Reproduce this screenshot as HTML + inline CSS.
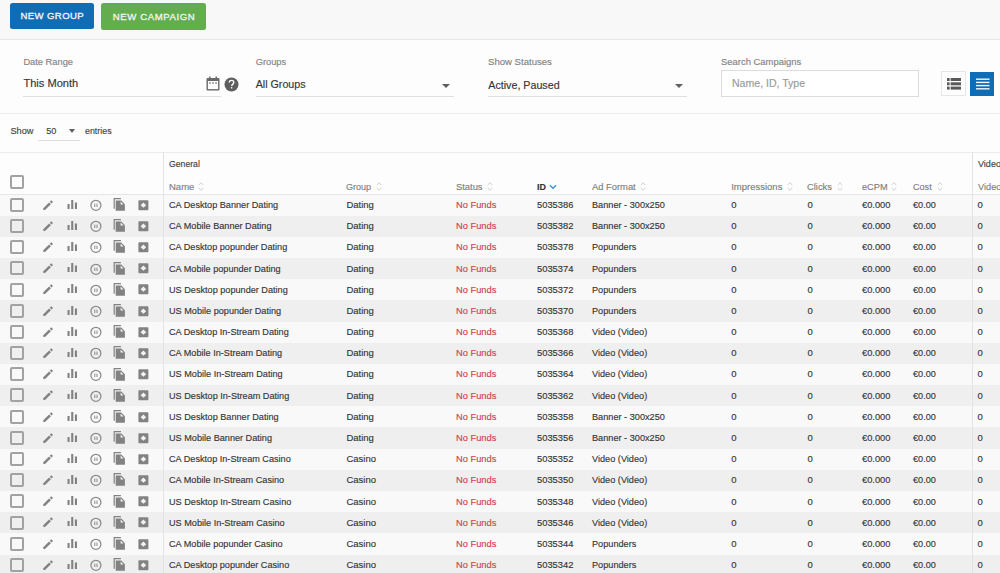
<!DOCTYPE html>
<html><head><meta charset="utf-8"><style>
html,body{margin:0;padding:0;}
body{width:1000px;height:573px;overflow:hidden;position:relative;background:#fdfdfd;font-family:"Liberation Sans", sans-serif;}
.t{position:absolute;white-space:nowrap;-webkit-text-stroke:0.15px currentColor;}
.ic{position:absolute;display:block;}
.btn{position:absolute;border-radius:2.5px;}
.cb{position:absolute;width:10px;height:10px;border:2px solid #a2a2a2;border-radius:2px;}
.arr{position:absolute;width:0;height:0;border-style:solid;border-width:4.4px 4.1px 0 4.1px;border-color:#5f5f5f transparent transparent transparent;}
</style></head><body>
<div style="position:absolute;left:0;top:0;width:1000px;height:39px;background:#f8f8f8;border-bottom:1px solid #e7e7e7"></div><div class="btn" style="left:9.5px;top:3px;width:84.5px;height:25.5px;background:#0f6db6"></div><div class="t" style="left:20.6px;top:11.00px;font-size:9.6px;line-height:9.6px;color:#f4f8fb;font-weight:normal;letter-spacing:0.35px;-webkit-text-stroke:0.3px #f4f8fb;">NEW GROUP</div><div class="btn" style="left:101px;top:3px;width:104.5px;height:26.5px;background:#63ad4f"></div><div class="t" style="left:112.8px;top:12.00px;font-size:9.6px;line-height:9.6px;color:#f1f5ef;font-weight:normal;letter-spacing:0.58px;-webkit-text-stroke:0.3px #f1f5ef;">NEW CAMPAIGN</div><div style="position:absolute;left:0;top:113px;width:1000px;height:1px;background:#eaeaea"></div><div class="t" style="left:23.4px;top:58.00px;font-size:9.3px;line-height:9.3px;color:#848484;font-weight:normal;letter-spacing:0px;">Date Range</div><div class="t" style="left:23.4px;top:78.00px;font-size:11.1px;line-height:11.1px;color:#353535;font-weight:normal;letter-spacing:0px;">This Month</div><div style="position:absolute;left:23.4px;top:96.4px;width:198px;height:1px;background:#e0e0e0"></div><svg class="ic" style="left:206px;top:75.5px" width="14" height="15" viewBox="0 0 14 15"><path fill="#6a6a6a" d="M3 0.5h1.5v1.5h5V0.5H11v1.5h1.2c.8 0 1.3.5 1.3 1.3v9.9c0 .8-.5 1.3-1.3 1.3H1.8C1 14.5.5 14 .5 13.2V3.3C.5 2.5 1 2 1.8 2H3z"/><rect x="1.9" y="5" width="10.2" height="8.1" fill="#fdfdfd"/><rect x="3.3" y="6.2" width="1.3" height="1.6" fill="#6a6a6a"/><rect x="6.35" y="6.2" width="1.3" height="1.6" fill="#6a6a6a"/><rect x="9.4" y="6.2" width="1.3" height="1.6" fill="#6a6a6a"/></svg><svg class="ic" style="left:224.3px;top:77.3px" width="15" height="15" viewBox="0 0 15 15"><circle cx="7.5" cy="7.5" r="7.0" fill="#5e5e5e"/><path d="M5.2 5.6c0-1.3 1-2.2 2.3-2.2s2.3.9 2.3 2.1c0 1.6-2.1 1.7-2.1 3.4" fill="none" stroke="#fdfdfd" stroke-width="1.4"/><rect x="6.9" y="10.1" width="1.4" height="1.4" fill="#fdfdfd"/></svg><div class="t" style="left:255.7px;top:58.00px;font-size:9.3px;line-height:9.3px;color:#848484;font-weight:normal;letter-spacing:0px;">Groups</div><div class="t" style="left:255.7px;top:79.00px;font-size:10.7px;line-height:10.7px;color:#353535;font-weight:normal;letter-spacing:0px;">All Groups</div><div style="position:absolute;left:255.7px;top:96.4px;width:198.3px;height:1px;background:#e0e0e0"></div><div class="arr" style="left:442.3px;top:83.6px"></div><div class="t" style="left:488.3px;top:58.00px;font-size:9.3px;line-height:9.3px;color:#848484;font-weight:normal;letter-spacing:0px;transform:scaleX(1.03);transform-origin:0 0;">Show Statuses</div><div class="t" style="left:488.3px;top:80.00px;font-size:10.7px;line-height:10.7px;color:#353535;font-weight:normal;letter-spacing:0px;">Active, Paused</div><div style="position:absolute;left:488.1px;top:96.4px;width:198.6px;height:1px;background:#e0e0e0"></div><div class="arr" style="left:675.2px;top:83.5px"></div><div class="t" style="left:720.8px;top:58.00px;font-size:9.3px;line-height:9.3px;color:#848484;font-weight:normal;letter-spacing:0px;transform:scaleX(1.015);transform-origin:0 0;">Search Campaigns</div><div style="position:absolute;left:721px;top:70.2px;width:195.8px;height:24.8px;border:1px solid #dcdcdc;background:#fff"></div><div class="t" style="left:732.3px;top:79.00px;font-size:10.2px;line-height:10.2px;color:#9a9a9a;font-weight:normal;letter-spacing:0px;transform:scaleX(1.035);transform-origin:0 0;">Name, ID, Type</div><div style="position:absolute;left:940.5px;top:71px;width:23.3px;height:23px;border:1px solid #e6e6e6;background:#fdfdfd"></div><svg class="ic" style="left:947px;top:78px" width="14" height="12" viewBox="0 0 14 12"><g fill="#5a5a5a"><rect x="0" y="0" width="2.6" height="3"/><rect x="3.6" y="0" width="10.4" height="3"/><rect x="0" y="4.3" width="2.6" height="3"/><rect x="3.6" y="4.3" width="10.4" height="3"/><rect x="0" y="8.6" width="2.6" height="3"/><rect x="3.6" y="8.6" width="10.4" height="3"/></g></svg><div style="position:absolute;left:970px;top:71.5px;width:24px;height:24.5px;background:#0f6db6"></div><svg class="ic" style="left:976px;top:77.5px" width="14" height="12" viewBox="0 0 14 12"><g fill="#f2f6fa"><rect x="0" y="0.5" width="13.5" height="1.4"/><rect x="0" y="3.7" width="13.5" height="1.4"/><rect x="0" y="6.9" width="13.5" height="1.4"/><rect x="0" y="10.1" width="13.5" height="1.4"/></g></svg><div class="t" style="left:10.4px;top:127.00px;font-size:9.2px;line-height:9.2px;color:#454545;font-weight:normal;letter-spacing:0px;">Show</div><div class="t" style="left:46.2px;top:127.00px;font-size:9.2px;line-height:9.2px;color:#454545;font-weight:normal;letter-spacing:0px;">50</div><div class="arr" style="left:68.9px;top:128.8px;border-width:4px 3.3px 0 3.3px;"></div><div style="position:absolute;left:37.5px;top:139.5px;width:42.5px;height:1px;background:#dcdcdc"></div><div class="t" style="left:84.8px;top:127.00px;font-size:9.2px;line-height:9.2px;color:#454545;font-weight:normal;letter-spacing:0px;transform:scaleX(0.964);transform-origin:0 0;">entries</div><div style="position:absolute;left:0;top:152px;width:1000px;height:1px;background:#ececec"></div><div style="position:absolute;left:0;top:194px;width:1000px;height:1px;background:#e6e6e6"></div><div class="cb" style="left:10.2px;top:175.2px"></div><div class="t" style="left:169px;top:159.00px;font-size:9.5px;line-height:9.5px;color:#3f3f3f;font-weight:normal;letter-spacing:0px;transform:scaleX(0.912);transform-origin:0 0;">General</div><div class="t" style="left:977.6px;top:159.00px;font-size:9.5px;line-height:9.5px;color:#3f3f3f;font-weight:normal;letter-spacing:0px;transform:scaleX(0.95);transform-origin:0 0;">Video</div><div class="t" style="left:169px;top:182.00px;font-size:9.5px;line-height:9.5px;color:#808080;font-weight:normal;letter-spacing:0px;">Name</div><svg class="ic" style="left:198px;top:181px" width="6" height="11" viewBox="0 0 6 11"><path d="M0.8 4.2L3 1.6 5.2 4.2M0.8 6.8L3 9.4 5.2 6.8" fill="none" stroke="#cfcfcf" stroke-width="0.9"/></svg><div class="t" style="left:346.4px;top:182.00px;font-size:9.5px;line-height:9.5px;color:#808080;font-weight:normal;letter-spacing:0px;transform:scaleX(0.946);transform-origin:0 0;">Group</div><svg class="ic" style="left:376px;top:181px" width="6" height="11" viewBox="0 0 6 11"><path d="M0.8 4.2L3 1.6 5.2 4.2M0.8 6.8L3 9.4 5.2 6.8" fill="none" stroke="#cfcfcf" stroke-width="0.9"/></svg><div class="t" style="left:456.4px;top:182.00px;font-size:9.5px;line-height:9.5px;color:#808080;font-weight:normal;letter-spacing:0px;transform:scaleX(0.985);transform-origin:0 0;">Status</div><svg class="ic" style="left:487px;top:181px" width="6" height="11" viewBox="0 0 6 11"><path d="M0.8 4.2L3 1.6 5.2 4.2M0.8 6.8L3 9.4 5.2 6.8" fill="none" stroke="#cfcfcf" stroke-width="0.9"/></svg><div class="t" style="left:591.6px;top:182.00px;font-size:9.5px;line-height:9.5px;color:#808080;font-weight:normal;letter-spacing:0px;transform:scaleX(0.986);transform-origin:0 0;">Ad Format</div><svg class="ic" style="left:639.6px;top:181px" width="6" height="11" viewBox="0 0 6 11"><path d="M0.8 4.2L3 1.6 5.2 4.2M0.8 6.8L3 9.4 5.2 6.8" fill="none" stroke="#cfcfcf" stroke-width="0.9"/></svg><div class="t" style="left:731.2px;top:182.00px;font-size:9.5px;line-height:9.5px;color:#808080;font-weight:normal;letter-spacing:0px;">Impressions</div><svg class="ic" style="left:786.6px;top:181px" width="6" height="11" viewBox="0 0 6 11"><path d="M0.8 4.2L3 1.6 5.2 4.2M0.8 6.8L3 9.4 5.2 6.8" fill="none" stroke="#cfcfcf" stroke-width="0.9"/></svg><div class="t" style="left:807.4px;top:182.00px;font-size:9.5px;line-height:9.5px;color:#808080;font-weight:normal;letter-spacing:0px;transform:scaleX(0.984);transform-origin:0 0;">Clicks</div><svg class="ic" style="left:837px;top:181px" width="6" height="11" viewBox="0 0 6 11"><path d="M0.8 4.2L3 1.6 5.2 4.2M0.8 6.8L3 9.4 5.2 6.8" fill="none" stroke="#cfcfcf" stroke-width="0.9"/></svg><div class="t" style="left:862.3px;top:182.00px;font-size:9.5px;line-height:9.5px;color:#808080;font-weight:normal;letter-spacing:0px;transform:scaleX(0.969);transform-origin:0 0;">eCPM</div><svg class="ic" style="left:891.4px;top:181px" width="6" height="11" viewBox="0 0 6 11"><path d="M0.8 4.2L3 1.6 5.2 4.2M0.8 6.8L3 9.4 5.2 6.8" fill="none" stroke="#cfcfcf" stroke-width="0.9"/></svg><div class="t" style="left:913.2px;top:182.00px;font-size:9.5px;line-height:9.5px;color:#808080;font-weight:normal;letter-spacing:0px;transform:scaleX(0.955);transform-origin:0 0;">Cost</div><svg class="ic" style="left:937px;top:181px" width="6" height="11" viewBox="0 0 6 11"><path d="M0.8 4.2L3 1.6 5.2 4.2M0.8 6.8L3 9.4 5.2 6.8" fill="none" stroke="#cfcfcf" stroke-width="0.9"/></svg><div class="t" style="left:977.6px;top:182.00px;font-size:9.5px;line-height:9.5px;color:#808080;font-weight:normal;letter-spacing:0px;transform:scaleX(0.97);transform-origin:0 0;">Video</div><div class="t" style="left:536.6px;top:182.00px;font-size:9.5px;line-height:9.5px;color:#333;font-weight:bold;letter-spacing:0px;transform:scaleX(0.94);transform-origin:0 0;">ID</div><svg class="ic" style="left:548.5px;top:183.5px" width="8" height="6" viewBox="0 0 8 6"><path d="M0.9 1.2L4 4.3 7.1 1.2" fill="none" stroke="#3d8fcf" stroke-width="1.3"/></svg><div style="position:absolute;left:0;top:194.50px;width:1000px;height:21.18px;background:#f9f9f9"></div><div class="cb" style="left:10.2px;top:197.80px"></div><svg class="ic" style="left:42px;top:198.70px" width="12" height="12" viewBox="0 0 12 12"><path d="M1.9 10.4L8.0 4.3" stroke="#828282" stroke-width="2.5" stroke-linecap="butt"/><path d="M1.3 11.1L2.9 10.9 1.5 9.5z" fill="#828282"/><path d="M8.7 3.6L10.1 2.2" stroke="#828282" stroke-width="2.5"/></svg><svg class="ic" style="left:66px;top:198.70px" width="12" height="12" viewBox="0 0 12 12"><rect x="1.5" y="5.0" width="2.1" height="5" fill="#828282"/><rect x="5.2" y="1.0" width="2.1" height="9" fill="#828282"/><rect x="8.9" y="3.5" width="2.1" height="6.5" fill="#828282"/></svg><svg class="ic" style="left:89px;top:199.10px" width="13" height="13" viewBox="0 0 13 13"><circle cx="6.9" cy="6.3" r="5.0" fill="none" stroke="#8a8a8a" stroke-width="1.25"/><rect x="5.3" y="4.6" width="1.0" height="3.4" fill="#8a8a8a"/><rect x="7.5" y="4.6" width="1.0" height="3.4" fill="#8a8a8a"/></svg><svg class="ic" style="left:113px;top:197.10px" width="13" height="15" viewBox="0 0 13 15"><path fill="#828282" d="M0.6 1h7.3v1.2H1.8v9.6H0.6z"/><path fill="#828282" d="M2.7 3.6h5.6l3.6 3.6v6.6H2.7z"/><path fill="#f6f6f6" d="M7.6 4.5v2.9h2.9z"/></svg><svg class="ic" style="left:138px;top:199.70px" width="11" height="11" viewBox="0 0 11 11"><rect x="0.4" y="0.2" width="10" height="10" rx="0.8" fill="#828282"/><path fill="#f2f2f2" d="M2.6 5.2L5.4 2.6 8.2 5.2 5.4 7.8z"/></svg><div class="t" style="left:169px;top:200.00px;font-size:9.5px;line-height:9.5px;color:#363636;font-weight:normal;letter-spacing:0px;transform:scaleX(0.961);transform-origin:0 0;">CA Desktop Banner Dating</div><div class="t" style="left:346.4px;top:200.00px;font-size:9.5px;line-height:9.5px;color:#363636;font-weight:normal;letter-spacing:0px;">Dating</div><div class="t" style="left:456.4px;top:200.00px;font-size:9.5px;line-height:9.5px;color:#cf444c;font-weight:normal;letter-spacing:0px;transform:scaleX(0.98);transform-origin:0 0;">No Funds</div><div class="t" style="left:536.6px;top:200.00px;font-size:9.5px;line-height:9.5px;color:#363636;font-weight:normal;letter-spacing:0px;transform:scaleX(0.985);transform-origin:0 0;">5035386</div><div class="t" style="left:591.6px;top:200.00px;font-size:9.5px;line-height:9.5px;color:#363636;font-weight:normal;letter-spacing:0px;transform:scaleX(0.965);transform-origin:0 0;">Banner - 300x250</div><div class="t" style="left:731.2px;top:200.00px;font-size:9.5px;line-height:9.5px;color:#363636;font-weight:normal;letter-spacing:0px;">0</div><div class="t" style="left:807.4px;top:200.00px;font-size:9.5px;line-height:9.5px;color:#363636;font-weight:normal;letter-spacing:0px;">0</div><div class="t" style="left:862.3px;top:200.00px;font-size:9.5px;line-height:9.5px;color:#363636;font-weight:normal;letter-spacing:0px;transform:scaleX(0.98);transform-origin:0 0;">&euro;0.000</div><div class="t" style="left:913.2px;top:200.00px;font-size:9.5px;line-height:9.5px;color:#363636;font-weight:normal;letter-spacing:0px;transform:scaleX(0.96);transform-origin:0 0;">&euro;0.00</div><div class="t" style="left:977.6px;top:200.00px;font-size:9.5px;line-height:9.5px;color:#363636;font-weight:normal;letter-spacing:0px;">0</div><div style="position:absolute;left:0;top:215.68px;width:1000px;height:21.18px;background:#efefef"></div><div class="cb" style="left:10.2px;top:218.98px"></div><svg class="ic" style="left:42px;top:219.88px" width="12" height="12" viewBox="0 0 12 12"><path d="M1.9 10.4L8.0 4.3" stroke="#828282" stroke-width="2.5" stroke-linecap="butt"/><path d="M1.3 11.1L2.9 10.9 1.5 9.5z" fill="#828282"/><path d="M8.7 3.6L10.1 2.2" stroke="#828282" stroke-width="2.5"/></svg><svg class="ic" style="left:66px;top:219.88px" width="12" height="12" viewBox="0 0 12 12"><rect x="1.5" y="5.0" width="2.1" height="5" fill="#828282"/><rect x="5.2" y="1.0" width="2.1" height="9" fill="#828282"/><rect x="8.9" y="3.5" width="2.1" height="6.5" fill="#828282"/></svg><svg class="ic" style="left:89px;top:220.28px" width="13" height="13" viewBox="0 0 13 13"><circle cx="6.9" cy="6.3" r="5.0" fill="none" stroke="#8a8a8a" stroke-width="1.25"/><rect x="5.3" y="4.6" width="1.0" height="3.4" fill="#8a8a8a"/><rect x="7.5" y="4.6" width="1.0" height="3.4" fill="#8a8a8a"/></svg><svg class="ic" style="left:113px;top:218.28px" width="13" height="15" viewBox="0 0 13 15"><path fill="#828282" d="M0.6 1h7.3v1.2H1.8v9.6H0.6z"/><path fill="#828282" d="M2.7 3.6h5.6l3.6 3.6v6.6H2.7z"/><path fill="#f6f6f6" d="M7.6 4.5v2.9h2.9z"/></svg><svg class="ic" style="left:138px;top:220.88px" width="11" height="11" viewBox="0 0 11 11"><rect x="0.4" y="0.2" width="10" height="10" rx="0.8" fill="#828282"/><path fill="#f2f2f2" d="M2.6 5.2L5.4 2.6 8.2 5.2 5.4 7.8z"/></svg><div class="t" style="left:169px;top:221.00px;font-size:9.5px;line-height:9.5px;color:#363636;font-weight:normal;letter-spacing:0px;transform:scaleX(0.961);transform-origin:0 0;">CA Mobile Banner Dating</div><div class="t" style="left:346.4px;top:221.00px;font-size:9.5px;line-height:9.5px;color:#363636;font-weight:normal;letter-spacing:0px;">Dating</div><div class="t" style="left:456.4px;top:221.00px;font-size:9.5px;line-height:9.5px;color:#cf444c;font-weight:normal;letter-spacing:0px;transform:scaleX(0.98);transform-origin:0 0;">No Funds</div><div class="t" style="left:536.6px;top:221.00px;font-size:9.5px;line-height:9.5px;color:#363636;font-weight:normal;letter-spacing:0px;transform:scaleX(0.985);transform-origin:0 0;">5035382</div><div class="t" style="left:591.6px;top:221.00px;font-size:9.5px;line-height:9.5px;color:#363636;font-weight:normal;letter-spacing:0px;transform:scaleX(0.965);transform-origin:0 0;">Banner - 300x250</div><div class="t" style="left:731.2px;top:221.00px;font-size:9.5px;line-height:9.5px;color:#363636;font-weight:normal;letter-spacing:0px;">0</div><div class="t" style="left:807.4px;top:221.00px;font-size:9.5px;line-height:9.5px;color:#363636;font-weight:normal;letter-spacing:0px;">0</div><div class="t" style="left:862.3px;top:221.00px;font-size:9.5px;line-height:9.5px;color:#363636;font-weight:normal;letter-spacing:0px;transform:scaleX(0.98);transform-origin:0 0;">&euro;0.000</div><div class="t" style="left:913.2px;top:221.00px;font-size:9.5px;line-height:9.5px;color:#363636;font-weight:normal;letter-spacing:0px;transform:scaleX(0.96);transform-origin:0 0;">&euro;0.00</div><div class="t" style="left:977.6px;top:221.00px;font-size:9.5px;line-height:9.5px;color:#363636;font-weight:normal;letter-spacing:0px;">0</div><div style="position:absolute;left:0;top:236.86px;width:1000px;height:21.18px;background:#f9f9f9"></div><div class="cb" style="left:10.2px;top:240.16px"></div><svg class="ic" style="left:42px;top:241.06px" width="12" height="12" viewBox="0 0 12 12"><path d="M1.9 10.4L8.0 4.3" stroke="#828282" stroke-width="2.5" stroke-linecap="butt"/><path d="M1.3 11.1L2.9 10.9 1.5 9.5z" fill="#828282"/><path d="M8.7 3.6L10.1 2.2" stroke="#828282" stroke-width="2.5"/></svg><svg class="ic" style="left:66px;top:241.06px" width="12" height="12" viewBox="0 0 12 12"><rect x="1.5" y="5.0" width="2.1" height="5" fill="#828282"/><rect x="5.2" y="1.0" width="2.1" height="9" fill="#828282"/><rect x="8.9" y="3.5" width="2.1" height="6.5" fill="#828282"/></svg><svg class="ic" style="left:89px;top:241.46px" width="13" height="13" viewBox="0 0 13 13"><circle cx="6.9" cy="6.3" r="5.0" fill="none" stroke="#8a8a8a" stroke-width="1.25"/><rect x="5.3" y="4.6" width="1.0" height="3.4" fill="#8a8a8a"/><rect x="7.5" y="4.6" width="1.0" height="3.4" fill="#8a8a8a"/></svg><svg class="ic" style="left:113px;top:239.46px" width="13" height="15" viewBox="0 0 13 15"><path fill="#828282" d="M0.6 1h7.3v1.2H1.8v9.6H0.6z"/><path fill="#828282" d="M2.7 3.6h5.6l3.6 3.6v6.6H2.7z"/><path fill="#f6f6f6" d="M7.6 4.5v2.9h2.9z"/></svg><svg class="ic" style="left:138px;top:242.06px" width="11" height="11" viewBox="0 0 11 11"><rect x="0.4" y="0.2" width="10" height="10" rx="0.8" fill="#828282"/><path fill="#f2f2f2" d="M2.6 5.2L5.4 2.6 8.2 5.2 5.4 7.8z"/></svg><div class="t" style="left:169px;top:242.00px;font-size:9.5px;line-height:9.5px;color:#363636;font-weight:normal;letter-spacing:0px;transform:scaleX(0.961);transform-origin:0 0;">CA Desktop popunder Dating</div><div class="t" style="left:346.4px;top:242.00px;font-size:9.5px;line-height:9.5px;color:#363636;font-weight:normal;letter-spacing:0px;">Dating</div><div class="t" style="left:456.4px;top:242.00px;font-size:9.5px;line-height:9.5px;color:#cf444c;font-weight:normal;letter-spacing:0px;transform:scaleX(0.98);transform-origin:0 0;">No Funds</div><div class="t" style="left:536.6px;top:242.00px;font-size:9.5px;line-height:9.5px;color:#363636;font-weight:normal;letter-spacing:0px;transform:scaleX(0.985);transform-origin:0 0;">5035378</div><div class="t" style="left:591.6px;top:242.00px;font-size:9.5px;line-height:9.5px;color:#363636;font-weight:normal;letter-spacing:0px;transform:scaleX(0.965);transform-origin:0 0;">Popunders</div><div class="t" style="left:731.2px;top:242.00px;font-size:9.5px;line-height:9.5px;color:#363636;font-weight:normal;letter-spacing:0px;">0</div><div class="t" style="left:807.4px;top:242.00px;font-size:9.5px;line-height:9.5px;color:#363636;font-weight:normal;letter-spacing:0px;">0</div><div class="t" style="left:862.3px;top:242.00px;font-size:9.5px;line-height:9.5px;color:#363636;font-weight:normal;letter-spacing:0px;transform:scaleX(0.98);transform-origin:0 0;">&euro;0.000</div><div class="t" style="left:913.2px;top:242.00px;font-size:9.5px;line-height:9.5px;color:#363636;font-weight:normal;letter-spacing:0px;transform:scaleX(0.96);transform-origin:0 0;">&euro;0.00</div><div class="t" style="left:977.6px;top:242.00px;font-size:9.5px;line-height:9.5px;color:#363636;font-weight:normal;letter-spacing:0px;">0</div><div style="position:absolute;left:0;top:258.04px;width:1000px;height:21.18px;background:#efefef"></div><div class="cb" style="left:10.2px;top:261.34px"></div><svg class="ic" style="left:42px;top:262.24px" width="12" height="12" viewBox="0 0 12 12"><path d="M1.9 10.4L8.0 4.3" stroke="#828282" stroke-width="2.5" stroke-linecap="butt"/><path d="M1.3 11.1L2.9 10.9 1.5 9.5z" fill="#828282"/><path d="M8.7 3.6L10.1 2.2" stroke="#828282" stroke-width="2.5"/></svg><svg class="ic" style="left:66px;top:262.24px" width="12" height="12" viewBox="0 0 12 12"><rect x="1.5" y="5.0" width="2.1" height="5" fill="#828282"/><rect x="5.2" y="1.0" width="2.1" height="9" fill="#828282"/><rect x="8.9" y="3.5" width="2.1" height="6.5" fill="#828282"/></svg><svg class="ic" style="left:89px;top:262.64px" width="13" height="13" viewBox="0 0 13 13"><circle cx="6.9" cy="6.3" r="5.0" fill="none" stroke="#8a8a8a" stroke-width="1.25"/><rect x="5.3" y="4.6" width="1.0" height="3.4" fill="#8a8a8a"/><rect x="7.5" y="4.6" width="1.0" height="3.4" fill="#8a8a8a"/></svg><svg class="ic" style="left:113px;top:260.64px" width="13" height="15" viewBox="0 0 13 15"><path fill="#828282" d="M0.6 1h7.3v1.2H1.8v9.6H0.6z"/><path fill="#828282" d="M2.7 3.6h5.6l3.6 3.6v6.6H2.7z"/><path fill="#f6f6f6" d="M7.6 4.5v2.9h2.9z"/></svg><svg class="ic" style="left:138px;top:263.24px" width="11" height="11" viewBox="0 0 11 11"><rect x="0.4" y="0.2" width="10" height="10" rx="0.8" fill="#828282"/><path fill="#f2f2f2" d="M2.6 5.2L5.4 2.6 8.2 5.2 5.4 7.8z"/></svg><div class="t" style="left:169px;top:264.00px;font-size:9.5px;line-height:9.5px;color:#363636;font-weight:normal;letter-spacing:0px;transform:scaleX(0.961);transform-origin:0 0;">CA Mobile popunder Dating</div><div class="t" style="left:346.4px;top:264.00px;font-size:9.5px;line-height:9.5px;color:#363636;font-weight:normal;letter-spacing:0px;">Dating</div><div class="t" style="left:456.4px;top:264.00px;font-size:9.5px;line-height:9.5px;color:#cf444c;font-weight:normal;letter-spacing:0px;transform:scaleX(0.98);transform-origin:0 0;">No Funds</div><div class="t" style="left:536.6px;top:264.00px;font-size:9.5px;line-height:9.5px;color:#363636;font-weight:normal;letter-spacing:0px;transform:scaleX(0.985);transform-origin:0 0;">5035374</div><div class="t" style="left:591.6px;top:264.00px;font-size:9.5px;line-height:9.5px;color:#363636;font-weight:normal;letter-spacing:0px;transform:scaleX(0.965);transform-origin:0 0;">Popunders</div><div class="t" style="left:731.2px;top:264.00px;font-size:9.5px;line-height:9.5px;color:#363636;font-weight:normal;letter-spacing:0px;">0</div><div class="t" style="left:807.4px;top:264.00px;font-size:9.5px;line-height:9.5px;color:#363636;font-weight:normal;letter-spacing:0px;">0</div><div class="t" style="left:862.3px;top:264.00px;font-size:9.5px;line-height:9.5px;color:#363636;font-weight:normal;letter-spacing:0px;transform:scaleX(0.98);transform-origin:0 0;">&euro;0.000</div><div class="t" style="left:913.2px;top:264.00px;font-size:9.5px;line-height:9.5px;color:#363636;font-weight:normal;letter-spacing:0px;transform:scaleX(0.96);transform-origin:0 0;">&euro;0.00</div><div class="t" style="left:977.6px;top:264.00px;font-size:9.5px;line-height:9.5px;color:#363636;font-weight:normal;letter-spacing:0px;">0</div><div style="position:absolute;left:0;top:279.22px;width:1000px;height:21.18px;background:#f9f9f9"></div><div class="cb" style="left:10.2px;top:282.52px"></div><svg class="ic" style="left:42px;top:283.42px" width="12" height="12" viewBox="0 0 12 12"><path d="M1.9 10.4L8.0 4.3" stroke="#828282" stroke-width="2.5" stroke-linecap="butt"/><path d="M1.3 11.1L2.9 10.9 1.5 9.5z" fill="#828282"/><path d="M8.7 3.6L10.1 2.2" stroke="#828282" stroke-width="2.5"/></svg><svg class="ic" style="left:66px;top:283.42px" width="12" height="12" viewBox="0 0 12 12"><rect x="1.5" y="5.0" width="2.1" height="5" fill="#828282"/><rect x="5.2" y="1.0" width="2.1" height="9" fill="#828282"/><rect x="8.9" y="3.5" width="2.1" height="6.5" fill="#828282"/></svg><svg class="ic" style="left:89px;top:283.82px" width="13" height="13" viewBox="0 0 13 13"><circle cx="6.9" cy="6.3" r="5.0" fill="none" stroke="#8a8a8a" stroke-width="1.25"/><rect x="5.3" y="4.6" width="1.0" height="3.4" fill="#8a8a8a"/><rect x="7.5" y="4.6" width="1.0" height="3.4" fill="#8a8a8a"/></svg><svg class="ic" style="left:113px;top:281.82px" width="13" height="15" viewBox="0 0 13 15"><path fill="#828282" d="M0.6 1h7.3v1.2H1.8v9.6H0.6z"/><path fill="#828282" d="M2.7 3.6h5.6l3.6 3.6v6.6H2.7z"/><path fill="#f6f6f6" d="M7.6 4.5v2.9h2.9z"/></svg><svg class="ic" style="left:138px;top:284.42px" width="11" height="11" viewBox="0 0 11 11"><rect x="0.4" y="0.2" width="10" height="10" rx="0.8" fill="#828282"/><path fill="#f2f2f2" d="M2.6 5.2L5.4 2.6 8.2 5.2 5.4 7.8z"/></svg><div class="t" style="left:169px;top:285.00px;font-size:9.5px;line-height:9.5px;color:#363636;font-weight:normal;letter-spacing:0px;transform:scaleX(0.961);transform-origin:0 0;">US Desktop popunder Dating</div><div class="t" style="left:346.4px;top:285.00px;font-size:9.5px;line-height:9.5px;color:#363636;font-weight:normal;letter-spacing:0px;">Dating</div><div class="t" style="left:456.4px;top:285.00px;font-size:9.5px;line-height:9.5px;color:#cf444c;font-weight:normal;letter-spacing:0px;transform:scaleX(0.98);transform-origin:0 0;">No Funds</div><div class="t" style="left:536.6px;top:285.00px;font-size:9.5px;line-height:9.5px;color:#363636;font-weight:normal;letter-spacing:0px;transform:scaleX(0.985);transform-origin:0 0;">5035372</div><div class="t" style="left:591.6px;top:285.00px;font-size:9.5px;line-height:9.5px;color:#363636;font-weight:normal;letter-spacing:0px;transform:scaleX(0.965);transform-origin:0 0;">Popunders</div><div class="t" style="left:731.2px;top:285.00px;font-size:9.5px;line-height:9.5px;color:#363636;font-weight:normal;letter-spacing:0px;">0</div><div class="t" style="left:807.4px;top:285.00px;font-size:9.5px;line-height:9.5px;color:#363636;font-weight:normal;letter-spacing:0px;">0</div><div class="t" style="left:862.3px;top:285.00px;font-size:9.5px;line-height:9.5px;color:#363636;font-weight:normal;letter-spacing:0px;transform:scaleX(0.98);transform-origin:0 0;">&euro;0.000</div><div class="t" style="left:913.2px;top:285.00px;font-size:9.5px;line-height:9.5px;color:#363636;font-weight:normal;letter-spacing:0px;transform:scaleX(0.96);transform-origin:0 0;">&euro;0.00</div><div class="t" style="left:977.6px;top:285.00px;font-size:9.5px;line-height:9.5px;color:#363636;font-weight:normal;letter-spacing:0px;">0</div><div style="position:absolute;left:0;top:300.40px;width:1000px;height:21.18px;background:#efefef"></div><div class="cb" style="left:10.2px;top:303.70px"></div><svg class="ic" style="left:42px;top:304.60px" width="12" height="12" viewBox="0 0 12 12"><path d="M1.9 10.4L8.0 4.3" stroke="#828282" stroke-width="2.5" stroke-linecap="butt"/><path d="M1.3 11.1L2.9 10.9 1.5 9.5z" fill="#828282"/><path d="M8.7 3.6L10.1 2.2" stroke="#828282" stroke-width="2.5"/></svg><svg class="ic" style="left:66px;top:304.60px" width="12" height="12" viewBox="0 0 12 12"><rect x="1.5" y="5.0" width="2.1" height="5" fill="#828282"/><rect x="5.2" y="1.0" width="2.1" height="9" fill="#828282"/><rect x="8.9" y="3.5" width="2.1" height="6.5" fill="#828282"/></svg><svg class="ic" style="left:89px;top:305.00px" width="13" height="13" viewBox="0 0 13 13"><circle cx="6.9" cy="6.3" r="5.0" fill="none" stroke="#8a8a8a" stroke-width="1.25"/><rect x="5.3" y="4.6" width="1.0" height="3.4" fill="#8a8a8a"/><rect x="7.5" y="4.6" width="1.0" height="3.4" fill="#8a8a8a"/></svg><svg class="ic" style="left:113px;top:303.00px" width="13" height="15" viewBox="0 0 13 15"><path fill="#828282" d="M0.6 1h7.3v1.2H1.8v9.6H0.6z"/><path fill="#828282" d="M2.7 3.6h5.6l3.6 3.6v6.6H2.7z"/><path fill="#f6f6f6" d="M7.6 4.5v2.9h2.9z"/></svg><svg class="ic" style="left:138px;top:305.60px" width="11" height="11" viewBox="0 0 11 11"><rect x="0.4" y="0.2" width="10" height="10" rx="0.8" fill="#828282"/><path fill="#f2f2f2" d="M2.6 5.2L5.4 2.6 8.2 5.2 5.4 7.8z"/></svg><div class="t" style="left:169px;top:306.00px;font-size:9.5px;line-height:9.5px;color:#363636;font-weight:normal;letter-spacing:0px;transform:scaleX(0.961);transform-origin:0 0;">US Mobile popunder Dating</div><div class="t" style="left:346.4px;top:306.00px;font-size:9.5px;line-height:9.5px;color:#363636;font-weight:normal;letter-spacing:0px;">Dating</div><div class="t" style="left:456.4px;top:306.00px;font-size:9.5px;line-height:9.5px;color:#cf444c;font-weight:normal;letter-spacing:0px;transform:scaleX(0.98);transform-origin:0 0;">No Funds</div><div class="t" style="left:536.6px;top:306.00px;font-size:9.5px;line-height:9.5px;color:#363636;font-weight:normal;letter-spacing:0px;transform:scaleX(0.985);transform-origin:0 0;">5035370</div><div class="t" style="left:591.6px;top:306.00px;font-size:9.5px;line-height:9.5px;color:#363636;font-weight:normal;letter-spacing:0px;transform:scaleX(0.965);transform-origin:0 0;">Popunders</div><div class="t" style="left:731.2px;top:306.00px;font-size:9.5px;line-height:9.5px;color:#363636;font-weight:normal;letter-spacing:0px;">0</div><div class="t" style="left:807.4px;top:306.00px;font-size:9.5px;line-height:9.5px;color:#363636;font-weight:normal;letter-spacing:0px;">0</div><div class="t" style="left:862.3px;top:306.00px;font-size:9.5px;line-height:9.5px;color:#363636;font-weight:normal;letter-spacing:0px;transform:scaleX(0.98);transform-origin:0 0;">&euro;0.000</div><div class="t" style="left:913.2px;top:306.00px;font-size:9.5px;line-height:9.5px;color:#363636;font-weight:normal;letter-spacing:0px;transform:scaleX(0.96);transform-origin:0 0;">&euro;0.00</div><div class="t" style="left:977.6px;top:306.00px;font-size:9.5px;line-height:9.5px;color:#363636;font-weight:normal;letter-spacing:0px;">0</div><div style="position:absolute;left:0;top:321.58px;width:1000px;height:21.18px;background:#f9f9f9"></div><div class="cb" style="left:10.2px;top:324.88px"></div><svg class="ic" style="left:42px;top:325.78px" width="12" height="12" viewBox="0 0 12 12"><path d="M1.9 10.4L8.0 4.3" stroke="#828282" stroke-width="2.5" stroke-linecap="butt"/><path d="M1.3 11.1L2.9 10.9 1.5 9.5z" fill="#828282"/><path d="M8.7 3.6L10.1 2.2" stroke="#828282" stroke-width="2.5"/></svg><svg class="ic" style="left:66px;top:325.78px" width="12" height="12" viewBox="0 0 12 12"><rect x="1.5" y="5.0" width="2.1" height="5" fill="#828282"/><rect x="5.2" y="1.0" width="2.1" height="9" fill="#828282"/><rect x="8.9" y="3.5" width="2.1" height="6.5" fill="#828282"/></svg><svg class="ic" style="left:89px;top:326.18px" width="13" height="13" viewBox="0 0 13 13"><circle cx="6.9" cy="6.3" r="5.0" fill="none" stroke="#8a8a8a" stroke-width="1.25"/><rect x="5.3" y="4.6" width="1.0" height="3.4" fill="#8a8a8a"/><rect x="7.5" y="4.6" width="1.0" height="3.4" fill="#8a8a8a"/></svg><svg class="ic" style="left:113px;top:324.18px" width="13" height="15" viewBox="0 0 13 15"><path fill="#828282" d="M0.6 1h7.3v1.2H1.8v9.6H0.6z"/><path fill="#828282" d="M2.7 3.6h5.6l3.6 3.6v6.6H2.7z"/><path fill="#f6f6f6" d="M7.6 4.5v2.9h2.9z"/></svg><svg class="ic" style="left:138px;top:326.78px" width="11" height="11" viewBox="0 0 11 11"><rect x="0.4" y="0.2" width="10" height="10" rx="0.8" fill="#828282"/><path fill="#f2f2f2" d="M2.6 5.2L5.4 2.6 8.2 5.2 5.4 7.8z"/></svg><div class="t" style="left:169px;top:327.00px;font-size:9.5px;line-height:9.5px;color:#363636;font-weight:normal;letter-spacing:0px;transform:scaleX(0.961);transform-origin:0 0;">CA Desktop In-Stream Dating</div><div class="t" style="left:346.4px;top:327.00px;font-size:9.5px;line-height:9.5px;color:#363636;font-weight:normal;letter-spacing:0px;">Dating</div><div class="t" style="left:456.4px;top:327.00px;font-size:9.5px;line-height:9.5px;color:#cf444c;font-weight:normal;letter-spacing:0px;transform:scaleX(0.98);transform-origin:0 0;">No Funds</div><div class="t" style="left:536.6px;top:327.00px;font-size:9.5px;line-height:9.5px;color:#363636;font-weight:normal;letter-spacing:0px;transform:scaleX(0.985);transform-origin:0 0;">5035368</div><div class="t" style="left:591.6px;top:327.00px;font-size:9.5px;line-height:9.5px;color:#363636;font-weight:normal;letter-spacing:0px;transform:scaleX(0.965);transform-origin:0 0;">Video (Video)</div><div class="t" style="left:731.2px;top:327.00px;font-size:9.5px;line-height:9.5px;color:#363636;font-weight:normal;letter-spacing:0px;">0</div><div class="t" style="left:807.4px;top:327.00px;font-size:9.5px;line-height:9.5px;color:#363636;font-weight:normal;letter-spacing:0px;">0</div><div class="t" style="left:862.3px;top:327.00px;font-size:9.5px;line-height:9.5px;color:#363636;font-weight:normal;letter-spacing:0px;transform:scaleX(0.98);transform-origin:0 0;">&euro;0.000</div><div class="t" style="left:913.2px;top:327.00px;font-size:9.5px;line-height:9.5px;color:#363636;font-weight:normal;letter-spacing:0px;transform:scaleX(0.96);transform-origin:0 0;">&euro;0.00</div><div class="t" style="left:977.6px;top:327.00px;font-size:9.5px;line-height:9.5px;color:#363636;font-weight:normal;letter-spacing:0px;">0</div><div style="position:absolute;left:0;top:342.76px;width:1000px;height:21.18px;background:#efefef"></div><div class="cb" style="left:10.2px;top:346.06px"></div><svg class="ic" style="left:42px;top:346.96px" width="12" height="12" viewBox="0 0 12 12"><path d="M1.9 10.4L8.0 4.3" stroke="#828282" stroke-width="2.5" stroke-linecap="butt"/><path d="M1.3 11.1L2.9 10.9 1.5 9.5z" fill="#828282"/><path d="M8.7 3.6L10.1 2.2" stroke="#828282" stroke-width="2.5"/></svg><svg class="ic" style="left:66px;top:346.96px" width="12" height="12" viewBox="0 0 12 12"><rect x="1.5" y="5.0" width="2.1" height="5" fill="#828282"/><rect x="5.2" y="1.0" width="2.1" height="9" fill="#828282"/><rect x="8.9" y="3.5" width="2.1" height="6.5" fill="#828282"/></svg><svg class="ic" style="left:89px;top:347.36px" width="13" height="13" viewBox="0 0 13 13"><circle cx="6.9" cy="6.3" r="5.0" fill="none" stroke="#8a8a8a" stroke-width="1.25"/><rect x="5.3" y="4.6" width="1.0" height="3.4" fill="#8a8a8a"/><rect x="7.5" y="4.6" width="1.0" height="3.4" fill="#8a8a8a"/></svg><svg class="ic" style="left:113px;top:345.36px" width="13" height="15" viewBox="0 0 13 15"><path fill="#828282" d="M0.6 1h7.3v1.2H1.8v9.6H0.6z"/><path fill="#828282" d="M2.7 3.6h5.6l3.6 3.6v6.6H2.7z"/><path fill="#f6f6f6" d="M7.6 4.5v2.9h2.9z"/></svg><svg class="ic" style="left:138px;top:347.96px" width="11" height="11" viewBox="0 0 11 11"><rect x="0.4" y="0.2" width="10" height="10" rx="0.8" fill="#828282"/><path fill="#f2f2f2" d="M2.6 5.2L5.4 2.6 8.2 5.2 5.4 7.8z"/></svg><div class="t" style="left:169px;top:348.00px;font-size:9.5px;line-height:9.5px;color:#363636;font-weight:normal;letter-spacing:0px;transform:scaleX(0.961);transform-origin:0 0;">CA Mobile In-Stream Dating</div><div class="t" style="left:346.4px;top:348.00px;font-size:9.5px;line-height:9.5px;color:#363636;font-weight:normal;letter-spacing:0px;">Dating</div><div class="t" style="left:456.4px;top:348.00px;font-size:9.5px;line-height:9.5px;color:#cf444c;font-weight:normal;letter-spacing:0px;transform:scaleX(0.98);transform-origin:0 0;">No Funds</div><div class="t" style="left:536.6px;top:348.00px;font-size:9.5px;line-height:9.5px;color:#363636;font-weight:normal;letter-spacing:0px;transform:scaleX(0.985);transform-origin:0 0;">5035366</div><div class="t" style="left:591.6px;top:348.00px;font-size:9.5px;line-height:9.5px;color:#363636;font-weight:normal;letter-spacing:0px;transform:scaleX(0.965);transform-origin:0 0;">Video (Video)</div><div class="t" style="left:731.2px;top:348.00px;font-size:9.5px;line-height:9.5px;color:#363636;font-weight:normal;letter-spacing:0px;">0</div><div class="t" style="left:807.4px;top:348.00px;font-size:9.5px;line-height:9.5px;color:#363636;font-weight:normal;letter-spacing:0px;">0</div><div class="t" style="left:862.3px;top:348.00px;font-size:9.5px;line-height:9.5px;color:#363636;font-weight:normal;letter-spacing:0px;transform:scaleX(0.98);transform-origin:0 0;">&euro;0.000</div><div class="t" style="left:913.2px;top:348.00px;font-size:9.5px;line-height:9.5px;color:#363636;font-weight:normal;letter-spacing:0px;transform:scaleX(0.96);transform-origin:0 0;">&euro;0.00</div><div class="t" style="left:977.6px;top:348.00px;font-size:9.5px;line-height:9.5px;color:#363636;font-weight:normal;letter-spacing:0px;">0</div><div style="position:absolute;left:0;top:363.94px;width:1000px;height:21.18px;background:#f9f9f9"></div><div class="cb" style="left:10.2px;top:367.24px"></div><svg class="ic" style="left:42px;top:368.14px" width="12" height="12" viewBox="0 0 12 12"><path d="M1.9 10.4L8.0 4.3" stroke="#828282" stroke-width="2.5" stroke-linecap="butt"/><path d="M1.3 11.1L2.9 10.9 1.5 9.5z" fill="#828282"/><path d="M8.7 3.6L10.1 2.2" stroke="#828282" stroke-width="2.5"/></svg><svg class="ic" style="left:66px;top:368.14px" width="12" height="12" viewBox="0 0 12 12"><rect x="1.5" y="5.0" width="2.1" height="5" fill="#828282"/><rect x="5.2" y="1.0" width="2.1" height="9" fill="#828282"/><rect x="8.9" y="3.5" width="2.1" height="6.5" fill="#828282"/></svg><svg class="ic" style="left:89px;top:368.54px" width="13" height="13" viewBox="0 0 13 13"><circle cx="6.9" cy="6.3" r="5.0" fill="none" stroke="#8a8a8a" stroke-width="1.25"/><rect x="5.3" y="4.6" width="1.0" height="3.4" fill="#8a8a8a"/><rect x="7.5" y="4.6" width="1.0" height="3.4" fill="#8a8a8a"/></svg><svg class="ic" style="left:113px;top:366.54px" width="13" height="15" viewBox="0 0 13 15"><path fill="#828282" d="M0.6 1h7.3v1.2H1.8v9.6H0.6z"/><path fill="#828282" d="M2.7 3.6h5.6l3.6 3.6v6.6H2.7z"/><path fill="#f6f6f6" d="M7.6 4.5v2.9h2.9z"/></svg><svg class="ic" style="left:138px;top:369.14px" width="11" height="11" viewBox="0 0 11 11"><rect x="0.4" y="0.2" width="10" height="10" rx="0.8" fill="#828282"/><path fill="#f2f2f2" d="M2.6 5.2L5.4 2.6 8.2 5.2 5.4 7.8z"/></svg><div class="t" style="left:169px;top:369.00px;font-size:9.5px;line-height:9.5px;color:#363636;font-weight:normal;letter-spacing:0px;transform:scaleX(0.961);transform-origin:0 0;">US Mobile In-Stream Dating</div><div class="t" style="left:346.4px;top:369.00px;font-size:9.5px;line-height:9.5px;color:#363636;font-weight:normal;letter-spacing:0px;">Dating</div><div class="t" style="left:456.4px;top:369.00px;font-size:9.5px;line-height:9.5px;color:#cf444c;font-weight:normal;letter-spacing:0px;transform:scaleX(0.98);transform-origin:0 0;">No Funds</div><div class="t" style="left:536.6px;top:369.00px;font-size:9.5px;line-height:9.5px;color:#363636;font-weight:normal;letter-spacing:0px;transform:scaleX(0.985);transform-origin:0 0;">5035364</div><div class="t" style="left:591.6px;top:369.00px;font-size:9.5px;line-height:9.5px;color:#363636;font-weight:normal;letter-spacing:0px;transform:scaleX(0.965);transform-origin:0 0;">Video (Video)</div><div class="t" style="left:731.2px;top:369.00px;font-size:9.5px;line-height:9.5px;color:#363636;font-weight:normal;letter-spacing:0px;">0</div><div class="t" style="left:807.4px;top:369.00px;font-size:9.5px;line-height:9.5px;color:#363636;font-weight:normal;letter-spacing:0px;">0</div><div class="t" style="left:862.3px;top:369.00px;font-size:9.5px;line-height:9.5px;color:#363636;font-weight:normal;letter-spacing:0px;transform:scaleX(0.98);transform-origin:0 0;">&euro;0.000</div><div class="t" style="left:913.2px;top:369.00px;font-size:9.5px;line-height:9.5px;color:#363636;font-weight:normal;letter-spacing:0px;transform:scaleX(0.96);transform-origin:0 0;">&euro;0.00</div><div class="t" style="left:977.6px;top:369.00px;font-size:9.5px;line-height:9.5px;color:#363636;font-weight:normal;letter-spacing:0px;">0</div><div style="position:absolute;left:0;top:385.12px;width:1000px;height:21.18px;background:#efefef"></div><div class="cb" style="left:10.2px;top:388.42px"></div><svg class="ic" style="left:42px;top:389.32px" width="12" height="12" viewBox="0 0 12 12"><path d="M1.9 10.4L8.0 4.3" stroke="#828282" stroke-width="2.5" stroke-linecap="butt"/><path d="M1.3 11.1L2.9 10.9 1.5 9.5z" fill="#828282"/><path d="M8.7 3.6L10.1 2.2" stroke="#828282" stroke-width="2.5"/></svg><svg class="ic" style="left:66px;top:389.32px" width="12" height="12" viewBox="0 0 12 12"><rect x="1.5" y="5.0" width="2.1" height="5" fill="#828282"/><rect x="5.2" y="1.0" width="2.1" height="9" fill="#828282"/><rect x="8.9" y="3.5" width="2.1" height="6.5" fill="#828282"/></svg><svg class="ic" style="left:89px;top:389.72px" width="13" height="13" viewBox="0 0 13 13"><circle cx="6.9" cy="6.3" r="5.0" fill="none" stroke="#8a8a8a" stroke-width="1.25"/><rect x="5.3" y="4.6" width="1.0" height="3.4" fill="#8a8a8a"/><rect x="7.5" y="4.6" width="1.0" height="3.4" fill="#8a8a8a"/></svg><svg class="ic" style="left:113px;top:387.72px" width="13" height="15" viewBox="0 0 13 15"><path fill="#828282" d="M0.6 1h7.3v1.2H1.8v9.6H0.6z"/><path fill="#828282" d="M2.7 3.6h5.6l3.6 3.6v6.6H2.7z"/><path fill="#f6f6f6" d="M7.6 4.5v2.9h2.9z"/></svg><svg class="ic" style="left:138px;top:390.32px" width="11" height="11" viewBox="0 0 11 11"><rect x="0.4" y="0.2" width="10" height="10" rx="0.8" fill="#828282"/><path fill="#f2f2f2" d="M2.6 5.2L5.4 2.6 8.2 5.2 5.4 7.8z"/></svg><div class="t" style="left:169px;top:391.00px;font-size:9.5px;line-height:9.5px;color:#363636;font-weight:normal;letter-spacing:0px;transform:scaleX(0.961);transform-origin:0 0;">US Desktop In-Stream Dating</div><div class="t" style="left:346.4px;top:391.00px;font-size:9.5px;line-height:9.5px;color:#363636;font-weight:normal;letter-spacing:0px;">Dating</div><div class="t" style="left:456.4px;top:391.00px;font-size:9.5px;line-height:9.5px;color:#cf444c;font-weight:normal;letter-spacing:0px;transform:scaleX(0.98);transform-origin:0 0;">No Funds</div><div class="t" style="left:536.6px;top:391.00px;font-size:9.5px;line-height:9.5px;color:#363636;font-weight:normal;letter-spacing:0px;transform:scaleX(0.985);transform-origin:0 0;">5035362</div><div class="t" style="left:591.6px;top:391.00px;font-size:9.5px;line-height:9.5px;color:#363636;font-weight:normal;letter-spacing:0px;transform:scaleX(0.965);transform-origin:0 0;">Video (Video)</div><div class="t" style="left:731.2px;top:391.00px;font-size:9.5px;line-height:9.5px;color:#363636;font-weight:normal;letter-spacing:0px;">0</div><div class="t" style="left:807.4px;top:391.00px;font-size:9.5px;line-height:9.5px;color:#363636;font-weight:normal;letter-spacing:0px;">0</div><div class="t" style="left:862.3px;top:391.00px;font-size:9.5px;line-height:9.5px;color:#363636;font-weight:normal;letter-spacing:0px;transform:scaleX(0.98);transform-origin:0 0;">&euro;0.000</div><div class="t" style="left:913.2px;top:391.00px;font-size:9.5px;line-height:9.5px;color:#363636;font-weight:normal;letter-spacing:0px;transform:scaleX(0.96);transform-origin:0 0;">&euro;0.00</div><div class="t" style="left:977.6px;top:391.00px;font-size:9.5px;line-height:9.5px;color:#363636;font-weight:normal;letter-spacing:0px;">0</div><div style="position:absolute;left:0;top:406.30px;width:1000px;height:21.18px;background:#f9f9f9"></div><div class="cb" style="left:10.2px;top:409.60px"></div><svg class="ic" style="left:42px;top:410.50px" width="12" height="12" viewBox="0 0 12 12"><path d="M1.9 10.4L8.0 4.3" stroke="#828282" stroke-width="2.5" stroke-linecap="butt"/><path d="M1.3 11.1L2.9 10.9 1.5 9.5z" fill="#828282"/><path d="M8.7 3.6L10.1 2.2" stroke="#828282" stroke-width="2.5"/></svg><svg class="ic" style="left:66px;top:410.50px" width="12" height="12" viewBox="0 0 12 12"><rect x="1.5" y="5.0" width="2.1" height="5" fill="#828282"/><rect x="5.2" y="1.0" width="2.1" height="9" fill="#828282"/><rect x="8.9" y="3.5" width="2.1" height="6.5" fill="#828282"/></svg><svg class="ic" style="left:89px;top:410.90px" width="13" height="13" viewBox="0 0 13 13"><circle cx="6.9" cy="6.3" r="5.0" fill="none" stroke="#8a8a8a" stroke-width="1.25"/><rect x="5.3" y="4.6" width="1.0" height="3.4" fill="#8a8a8a"/><rect x="7.5" y="4.6" width="1.0" height="3.4" fill="#8a8a8a"/></svg><svg class="ic" style="left:113px;top:408.90px" width="13" height="15" viewBox="0 0 13 15"><path fill="#828282" d="M0.6 1h7.3v1.2H1.8v9.6H0.6z"/><path fill="#828282" d="M2.7 3.6h5.6l3.6 3.6v6.6H2.7z"/><path fill="#f6f6f6" d="M7.6 4.5v2.9h2.9z"/></svg><svg class="ic" style="left:138px;top:411.50px" width="11" height="11" viewBox="0 0 11 11"><rect x="0.4" y="0.2" width="10" height="10" rx="0.8" fill="#828282"/><path fill="#f2f2f2" d="M2.6 5.2L5.4 2.6 8.2 5.2 5.4 7.8z"/></svg><div class="t" style="left:169px;top:412.00px;font-size:9.5px;line-height:9.5px;color:#363636;font-weight:normal;letter-spacing:0px;transform:scaleX(0.961);transform-origin:0 0;">US Desktop Banner Dating</div><div class="t" style="left:346.4px;top:412.00px;font-size:9.5px;line-height:9.5px;color:#363636;font-weight:normal;letter-spacing:0px;">Dating</div><div class="t" style="left:456.4px;top:412.00px;font-size:9.5px;line-height:9.5px;color:#cf444c;font-weight:normal;letter-spacing:0px;transform:scaleX(0.98);transform-origin:0 0;">No Funds</div><div class="t" style="left:536.6px;top:412.00px;font-size:9.5px;line-height:9.5px;color:#363636;font-weight:normal;letter-spacing:0px;transform:scaleX(0.985);transform-origin:0 0;">5035358</div><div class="t" style="left:591.6px;top:412.00px;font-size:9.5px;line-height:9.5px;color:#363636;font-weight:normal;letter-spacing:0px;transform:scaleX(0.965);transform-origin:0 0;">Banner - 300x250</div><div class="t" style="left:731.2px;top:412.00px;font-size:9.5px;line-height:9.5px;color:#363636;font-weight:normal;letter-spacing:0px;">0</div><div class="t" style="left:807.4px;top:412.00px;font-size:9.5px;line-height:9.5px;color:#363636;font-weight:normal;letter-spacing:0px;">0</div><div class="t" style="left:862.3px;top:412.00px;font-size:9.5px;line-height:9.5px;color:#363636;font-weight:normal;letter-spacing:0px;transform:scaleX(0.98);transform-origin:0 0;">&euro;0.000</div><div class="t" style="left:913.2px;top:412.00px;font-size:9.5px;line-height:9.5px;color:#363636;font-weight:normal;letter-spacing:0px;transform:scaleX(0.96);transform-origin:0 0;">&euro;0.00</div><div class="t" style="left:977.6px;top:412.00px;font-size:9.5px;line-height:9.5px;color:#363636;font-weight:normal;letter-spacing:0px;">0</div><div style="position:absolute;left:0;top:427.48px;width:1000px;height:21.18px;background:#efefef"></div><div class="cb" style="left:10.2px;top:430.78px"></div><svg class="ic" style="left:42px;top:431.68px" width="12" height="12" viewBox="0 0 12 12"><path d="M1.9 10.4L8.0 4.3" stroke="#828282" stroke-width="2.5" stroke-linecap="butt"/><path d="M1.3 11.1L2.9 10.9 1.5 9.5z" fill="#828282"/><path d="M8.7 3.6L10.1 2.2" stroke="#828282" stroke-width="2.5"/></svg><svg class="ic" style="left:66px;top:431.68px" width="12" height="12" viewBox="0 0 12 12"><rect x="1.5" y="5.0" width="2.1" height="5" fill="#828282"/><rect x="5.2" y="1.0" width="2.1" height="9" fill="#828282"/><rect x="8.9" y="3.5" width="2.1" height="6.5" fill="#828282"/></svg><svg class="ic" style="left:89px;top:432.08px" width="13" height="13" viewBox="0 0 13 13"><circle cx="6.9" cy="6.3" r="5.0" fill="none" stroke="#8a8a8a" stroke-width="1.25"/><rect x="5.3" y="4.6" width="1.0" height="3.4" fill="#8a8a8a"/><rect x="7.5" y="4.6" width="1.0" height="3.4" fill="#8a8a8a"/></svg><svg class="ic" style="left:113px;top:430.08px" width="13" height="15" viewBox="0 0 13 15"><path fill="#828282" d="M0.6 1h7.3v1.2H1.8v9.6H0.6z"/><path fill="#828282" d="M2.7 3.6h5.6l3.6 3.6v6.6H2.7z"/><path fill="#f6f6f6" d="M7.6 4.5v2.9h2.9z"/></svg><svg class="ic" style="left:138px;top:432.68px" width="11" height="11" viewBox="0 0 11 11"><rect x="0.4" y="0.2" width="10" height="10" rx="0.8" fill="#828282"/><path fill="#f2f2f2" d="M2.6 5.2L5.4 2.6 8.2 5.2 5.4 7.8z"/></svg><div class="t" style="left:169px;top:433.00px;font-size:9.5px;line-height:9.5px;color:#363636;font-weight:normal;letter-spacing:0px;transform:scaleX(0.961);transform-origin:0 0;">US Mobile Banner Dating</div><div class="t" style="left:346.4px;top:433.00px;font-size:9.5px;line-height:9.5px;color:#363636;font-weight:normal;letter-spacing:0px;">Dating</div><div class="t" style="left:456.4px;top:433.00px;font-size:9.5px;line-height:9.5px;color:#cf444c;font-weight:normal;letter-spacing:0px;transform:scaleX(0.98);transform-origin:0 0;">No Funds</div><div class="t" style="left:536.6px;top:433.00px;font-size:9.5px;line-height:9.5px;color:#363636;font-weight:normal;letter-spacing:0px;transform:scaleX(0.985);transform-origin:0 0;">5035356</div><div class="t" style="left:591.6px;top:433.00px;font-size:9.5px;line-height:9.5px;color:#363636;font-weight:normal;letter-spacing:0px;transform:scaleX(0.965);transform-origin:0 0;">Banner - 300x250</div><div class="t" style="left:731.2px;top:433.00px;font-size:9.5px;line-height:9.5px;color:#363636;font-weight:normal;letter-spacing:0px;">0</div><div class="t" style="left:807.4px;top:433.00px;font-size:9.5px;line-height:9.5px;color:#363636;font-weight:normal;letter-spacing:0px;">0</div><div class="t" style="left:862.3px;top:433.00px;font-size:9.5px;line-height:9.5px;color:#363636;font-weight:normal;letter-spacing:0px;transform:scaleX(0.98);transform-origin:0 0;">&euro;0.000</div><div class="t" style="left:913.2px;top:433.00px;font-size:9.5px;line-height:9.5px;color:#363636;font-weight:normal;letter-spacing:0px;transform:scaleX(0.96);transform-origin:0 0;">&euro;0.00</div><div class="t" style="left:977.6px;top:433.00px;font-size:9.5px;line-height:9.5px;color:#363636;font-weight:normal;letter-spacing:0px;">0</div><div style="position:absolute;left:0;top:448.66px;width:1000px;height:21.18px;background:#f9f9f9"></div><div class="cb" style="left:10.2px;top:451.96px"></div><svg class="ic" style="left:42px;top:452.86px" width="12" height="12" viewBox="0 0 12 12"><path d="M1.9 10.4L8.0 4.3" stroke="#828282" stroke-width="2.5" stroke-linecap="butt"/><path d="M1.3 11.1L2.9 10.9 1.5 9.5z" fill="#828282"/><path d="M8.7 3.6L10.1 2.2" stroke="#828282" stroke-width="2.5"/></svg><svg class="ic" style="left:66px;top:452.86px" width="12" height="12" viewBox="0 0 12 12"><rect x="1.5" y="5.0" width="2.1" height="5" fill="#828282"/><rect x="5.2" y="1.0" width="2.1" height="9" fill="#828282"/><rect x="8.9" y="3.5" width="2.1" height="6.5" fill="#828282"/></svg><svg class="ic" style="left:89px;top:453.26px" width="13" height="13" viewBox="0 0 13 13"><circle cx="6.9" cy="6.3" r="5.0" fill="none" stroke="#8a8a8a" stroke-width="1.25"/><rect x="5.3" y="4.6" width="1.0" height="3.4" fill="#8a8a8a"/><rect x="7.5" y="4.6" width="1.0" height="3.4" fill="#8a8a8a"/></svg><svg class="ic" style="left:113px;top:451.26px" width="13" height="15" viewBox="0 0 13 15"><path fill="#828282" d="M0.6 1h7.3v1.2H1.8v9.6H0.6z"/><path fill="#828282" d="M2.7 3.6h5.6l3.6 3.6v6.6H2.7z"/><path fill="#f6f6f6" d="M7.6 4.5v2.9h2.9z"/></svg><svg class="ic" style="left:138px;top:453.86px" width="11" height="11" viewBox="0 0 11 11"><rect x="0.4" y="0.2" width="10" height="10" rx="0.8" fill="#828282"/><path fill="#f2f2f2" d="M2.6 5.2L5.4 2.6 8.2 5.2 5.4 7.8z"/></svg><div class="t" style="left:169px;top:454.00px;font-size:9.5px;line-height:9.5px;color:#363636;font-weight:normal;letter-spacing:0px;transform:scaleX(0.961);transform-origin:0 0;">CA Desktop In-Stream Casino</div><div class="t" style="left:346.4px;top:454.00px;font-size:9.5px;line-height:9.5px;color:#363636;font-weight:normal;letter-spacing:0px;">Casino</div><div class="t" style="left:456.4px;top:454.00px;font-size:9.5px;line-height:9.5px;color:#cf444c;font-weight:normal;letter-spacing:0px;transform:scaleX(0.98);transform-origin:0 0;">No Funds</div><div class="t" style="left:536.6px;top:454.00px;font-size:9.5px;line-height:9.5px;color:#363636;font-weight:normal;letter-spacing:0px;transform:scaleX(0.985);transform-origin:0 0;">5035352</div><div class="t" style="left:591.6px;top:454.00px;font-size:9.5px;line-height:9.5px;color:#363636;font-weight:normal;letter-spacing:0px;transform:scaleX(0.965);transform-origin:0 0;">Video (Video)</div><div class="t" style="left:731.2px;top:454.00px;font-size:9.5px;line-height:9.5px;color:#363636;font-weight:normal;letter-spacing:0px;">0</div><div class="t" style="left:807.4px;top:454.00px;font-size:9.5px;line-height:9.5px;color:#363636;font-weight:normal;letter-spacing:0px;">0</div><div class="t" style="left:862.3px;top:454.00px;font-size:9.5px;line-height:9.5px;color:#363636;font-weight:normal;letter-spacing:0px;transform:scaleX(0.98);transform-origin:0 0;">&euro;0.000</div><div class="t" style="left:913.2px;top:454.00px;font-size:9.5px;line-height:9.5px;color:#363636;font-weight:normal;letter-spacing:0px;transform:scaleX(0.96);transform-origin:0 0;">&euro;0.00</div><div class="t" style="left:977.6px;top:454.00px;font-size:9.5px;line-height:9.5px;color:#363636;font-weight:normal;letter-spacing:0px;">0</div><div style="position:absolute;left:0;top:469.84px;width:1000px;height:21.18px;background:#efefef"></div><div class="cb" style="left:10.2px;top:473.14px"></div><svg class="ic" style="left:42px;top:474.04px" width="12" height="12" viewBox="0 0 12 12"><path d="M1.9 10.4L8.0 4.3" stroke="#828282" stroke-width="2.5" stroke-linecap="butt"/><path d="M1.3 11.1L2.9 10.9 1.5 9.5z" fill="#828282"/><path d="M8.7 3.6L10.1 2.2" stroke="#828282" stroke-width="2.5"/></svg><svg class="ic" style="left:66px;top:474.04px" width="12" height="12" viewBox="0 0 12 12"><rect x="1.5" y="5.0" width="2.1" height="5" fill="#828282"/><rect x="5.2" y="1.0" width="2.1" height="9" fill="#828282"/><rect x="8.9" y="3.5" width="2.1" height="6.5" fill="#828282"/></svg><svg class="ic" style="left:89px;top:474.44px" width="13" height="13" viewBox="0 0 13 13"><circle cx="6.9" cy="6.3" r="5.0" fill="none" stroke="#8a8a8a" stroke-width="1.25"/><rect x="5.3" y="4.6" width="1.0" height="3.4" fill="#8a8a8a"/><rect x="7.5" y="4.6" width="1.0" height="3.4" fill="#8a8a8a"/></svg><svg class="ic" style="left:113px;top:472.44px" width="13" height="15" viewBox="0 0 13 15"><path fill="#828282" d="M0.6 1h7.3v1.2H1.8v9.6H0.6z"/><path fill="#828282" d="M2.7 3.6h5.6l3.6 3.6v6.6H2.7z"/><path fill="#f6f6f6" d="M7.6 4.5v2.9h2.9z"/></svg><svg class="ic" style="left:138px;top:475.04px" width="11" height="11" viewBox="0 0 11 11"><rect x="0.4" y="0.2" width="10" height="10" rx="0.8" fill="#828282"/><path fill="#f2f2f2" d="M2.6 5.2L5.4 2.6 8.2 5.2 5.4 7.8z"/></svg><div class="t" style="left:169px;top:475.00px;font-size:9.5px;line-height:9.5px;color:#363636;font-weight:normal;letter-spacing:0px;transform:scaleX(0.961);transform-origin:0 0;">CA Mobile In-Stream Casino</div><div class="t" style="left:346.4px;top:475.00px;font-size:9.5px;line-height:9.5px;color:#363636;font-weight:normal;letter-spacing:0px;">Casino</div><div class="t" style="left:456.4px;top:475.00px;font-size:9.5px;line-height:9.5px;color:#cf444c;font-weight:normal;letter-spacing:0px;transform:scaleX(0.98);transform-origin:0 0;">No Funds</div><div class="t" style="left:536.6px;top:475.00px;font-size:9.5px;line-height:9.5px;color:#363636;font-weight:normal;letter-spacing:0px;transform:scaleX(0.985);transform-origin:0 0;">5035350</div><div class="t" style="left:591.6px;top:475.00px;font-size:9.5px;line-height:9.5px;color:#363636;font-weight:normal;letter-spacing:0px;transform:scaleX(0.965);transform-origin:0 0;">Video (Video)</div><div class="t" style="left:731.2px;top:475.00px;font-size:9.5px;line-height:9.5px;color:#363636;font-weight:normal;letter-spacing:0px;">0</div><div class="t" style="left:807.4px;top:475.00px;font-size:9.5px;line-height:9.5px;color:#363636;font-weight:normal;letter-spacing:0px;">0</div><div class="t" style="left:862.3px;top:475.00px;font-size:9.5px;line-height:9.5px;color:#363636;font-weight:normal;letter-spacing:0px;transform:scaleX(0.98);transform-origin:0 0;">&euro;0.000</div><div class="t" style="left:913.2px;top:475.00px;font-size:9.5px;line-height:9.5px;color:#363636;font-weight:normal;letter-spacing:0px;transform:scaleX(0.96);transform-origin:0 0;">&euro;0.00</div><div class="t" style="left:977.6px;top:475.00px;font-size:9.5px;line-height:9.5px;color:#363636;font-weight:normal;letter-spacing:0px;">0</div><div style="position:absolute;left:0;top:491.02px;width:1000px;height:21.18px;background:#f9f9f9"></div><div class="cb" style="left:10.2px;top:494.32px"></div><svg class="ic" style="left:42px;top:495.22px" width="12" height="12" viewBox="0 0 12 12"><path d="M1.9 10.4L8.0 4.3" stroke="#828282" stroke-width="2.5" stroke-linecap="butt"/><path d="M1.3 11.1L2.9 10.9 1.5 9.5z" fill="#828282"/><path d="M8.7 3.6L10.1 2.2" stroke="#828282" stroke-width="2.5"/></svg><svg class="ic" style="left:66px;top:495.22px" width="12" height="12" viewBox="0 0 12 12"><rect x="1.5" y="5.0" width="2.1" height="5" fill="#828282"/><rect x="5.2" y="1.0" width="2.1" height="9" fill="#828282"/><rect x="8.9" y="3.5" width="2.1" height="6.5" fill="#828282"/></svg><svg class="ic" style="left:89px;top:495.62px" width="13" height="13" viewBox="0 0 13 13"><circle cx="6.9" cy="6.3" r="5.0" fill="none" stroke="#8a8a8a" stroke-width="1.25"/><rect x="5.3" y="4.6" width="1.0" height="3.4" fill="#8a8a8a"/><rect x="7.5" y="4.6" width="1.0" height="3.4" fill="#8a8a8a"/></svg><svg class="ic" style="left:113px;top:493.62px" width="13" height="15" viewBox="0 0 13 15"><path fill="#828282" d="M0.6 1h7.3v1.2H1.8v9.6H0.6z"/><path fill="#828282" d="M2.7 3.6h5.6l3.6 3.6v6.6H2.7z"/><path fill="#f6f6f6" d="M7.6 4.5v2.9h2.9z"/></svg><svg class="ic" style="left:138px;top:496.22px" width="11" height="11" viewBox="0 0 11 11"><rect x="0.4" y="0.2" width="10" height="10" rx="0.8" fill="#828282"/><path fill="#f2f2f2" d="M2.6 5.2L5.4 2.6 8.2 5.2 5.4 7.8z"/></svg><div class="t" style="left:169px;top:497.00px;font-size:9.5px;line-height:9.5px;color:#363636;font-weight:normal;letter-spacing:0px;transform:scaleX(0.961);transform-origin:0 0;">US Desktop In-Stream Casino</div><div class="t" style="left:346.4px;top:497.00px;font-size:9.5px;line-height:9.5px;color:#363636;font-weight:normal;letter-spacing:0px;">Casino</div><div class="t" style="left:456.4px;top:497.00px;font-size:9.5px;line-height:9.5px;color:#cf444c;font-weight:normal;letter-spacing:0px;transform:scaleX(0.98);transform-origin:0 0;">No Funds</div><div class="t" style="left:536.6px;top:497.00px;font-size:9.5px;line-height:9.5px;color:#363636;font-weight:normal;letter-spacing:0px;transform:scaleX(0.985);transform-origin:0 0;">5035348</div><div class="t" style="left:591.6px;top:497.00px;font-size:9.5px;line-height:9.5px;color:#363636;font-weight:normal;letter-spacing:0px;transform:scaleX(0.965);transform-origin:0 0;">Video (Video)</div><div class="t" style="left:731.2px;top:497.00px;font-size:9.5px;line-height:9.5px;color:#363636;font-weight:normal;letter-spacing:0px;">0</div><div class="t" style="left:807.4px;top:497.00px;font-size:9.5px;line-height:9.5px;color:#363636;font-weight:normal;letter-spacing:0px;">0</div><div class="t" style="left:862.3px;top:497.00px;font-size:9.5px;line-height:9.5px;color:#363636;font-weight:normal;letter-spacing:0px;transform:scaleX(0.98);transform-origin:0 0;">&euro;0.000</div><div class="t" style="left:913.2px;top:497.00px;font-size:9.5px;line-height:9.5px;color:#363636;font-weight:normal;letter-spacing:0px;transform:scaleX(0.96);transform-origin:0 0;">&euro;0.00</div><div class="t" style="left:977.6px;top:497.00px;font-size:9.5px;line-height:9.5px;color:#363636;font-weight:normal;letter-spacing:0px;">0</div><div style="position:absolute;left:0;top:512.20px;width:1000px;height:21.18px;background:#efefef"></div><div class="cb" style="left:10.2px;top:515.50px"></div><svg class="ic" style="left:42px;top:516.40px" width="12" height="12" viewBox="0 0 12 12"><path d="M1.9 10.4L8.0 4.3" stroke="#828282" stroke-width="2.5" stroke-linecap="butt"/><path d="M1.3 11.1L2.9 10.9 1.5 9.5z" fill="#828282"/><path d="M8.7 3.6L10.1 2.2" stroke="#828282" stroke-width="2.5"/></svg><svg class="ic" style="left:66px;top:516.40px" width="12" height="12" viewBox="0 0 12 12"><rect x="1.5" y="5.0" width="2.1" height="5" fill="#828282"/><rect x="5.2" y="1.0" width="2.1" height="9" fill="#828282"/><rect x="8.9" y="3.5" width="2.1" height="6.5" fill="#828282"/></svg><svg class="ic" style="left:89px;top:516.80px" width="13" height="13" viewBox="0 0 13 13"><circle cx="6.9" cy="6.3" r="5.0" fill="none" stroke="#8a8a8a" stroke-width="1.25"/><rect x="5.3" y="4.6" width="1.0" height="3.4" fill="#8a8a8a"/><rect x="7.5" y="4.6" width="1.0" height="3.4" fill="#8a8a8a"/></svg><svg class="ic" style="left:113px;top:514.80px" width="13" height="15" viewBox="0 0 13 15"><path fill="#828282" d="M0.6 1h7.3v1.2H1.8v9.6H0.6z"/><path fill="#828282" d="M2.7 3.6h5.6l3.6 3.6v6.6H2.7z"/><path fill="#f6f6f6" d="M7.6 4.5v2.9h2.9z"/></svg><svg class="ic" style="left:138px;top:517.40px" width="11" height="11" viewBox="0 0 11 11"><rect x="0.4" y="0.2" width="10" height="10" rx="0.8" fill="#828282"/><path fill="#f2f2f2" d="M2.6 5.2L5.4 2.6 8.2 5.2 5.4 7.8z"/></svg><div class="t" style="left:169px;top:518.00px;font-size:9.5px;line-height:9.5px;color:#363636;font-weight:normal;letter-spacing:0px;transform:scaleX(0.961);transform-origin:0 0;">US Mobile In-Stream Casino</div><div class="t" style="left:346.4px;top:518.00px;font-size:9.5px;line-height:9.5px;color:#363636;font-weight:normal;letter-spacing:0px;">Casino</div><div class="t" style="left:456.4px;top:518.00px;font-size:9.5px;line-height:9.5px;color:#cf444c;font-weight:normal;letter-spacing:0px;transform:scaleX(0.98);transform-origin:0 0;">No Funds</div><div class="t" style="left:536.6px;top:518.00px;font-size:9.5px;line-height:9.5px;color:#363636;font-weight:normal;letter-spacing:0px;transform:scaleX(0.985);transform-origin:0 0;">5035346</div><div class="t" style="left:591.6px;top:518.00px;font-size:9.5px;line-height:9.5px;color:#363636;font-weight:normal;letter-spacing:0px;transform:scaleX(0.965);transform-origin:0 0;">Video (Video)</div><div class="t" style="left:731.2px;top:518.00px;font-size:9.5px;line-height:9.5px;color:#363636;font-weight:normal;letter-spacing:0px;">0</div><div class="t" style="left:807.4px;top:518.00px;font-size:9.5px;line-height:9.5px;color:#363636;font-weight:normal;letter-spacing:0px;">0</div><div class="t" style="left:862.3px;top:518.00px;font-size:9.5px;line-height:9.5px;color:#363636;font-weight:normal;letter-spacing:0px;transform:scaleX(0.98);transform-origin:0 0;">&euro;0.000</div><div class="t" style="left:913.2px;top:518.00px;font-size:9.5px;line-height:9.5px;color:#363636;font-weight:normal;letter-spacing:0px;transform:scaleX(0.96);transform-origin:0 0;">&euro;0.00</div><div class="t" style="left:977.6px;top:518.00px;font-size:9.5px;line-height:9.5px;color:#363636;font-weight:normal;letter-spacing:0px;">0</div><div style="position:absolute;left:0;top:533.38px;width:1000px;height:21.18px;background:#f9f9f9"></div><div class="cb" style="left:10.2px;top:536.68px"></div><svg class="ic" style="left:42px;top:537.58px" width="12" height="12" viewBox="0 0 12 12"><path d="M1.9 10.4L8.0 4.3" stroke="#828282" stroke-width="2.5" stroke-linecap="butt"/><path d="M1.3 11.1L2.9 10.9 1.5 9.5z" fill="#828282"/><path d="M8.7 3.6L10.1 2.2" stroke="#828282" stroke-width="2.5"/></svg><svg class="ic" style="left:66px;top:537.58px" width="12" height="12" viewBox="0 0 12 12"><rect x="1.5" y="5.0" width="2.1" height="5" fill="#828282"/><rect x="5.2" y="1.0" width="2.1" height="9" fill="#828282"/><rect x="8.9" y="3.5" width="2.1" height="6.5" fill="#828282"/></svg><svg class="ic" style="left:89px;top:537.98px" width="13" height="13" viewBox="0 0 13 13"><circle cx="6.9" cy="6.3" r="5.0" fill="none" stroke="#8a8a8a" stroke-width="1.25"/><rect x="5.3" y="4.6" width="1.0" height="3.4" fill="#8a8a8a"/><rect x="7.5" y="4.6" width="1.0" height="3.4" fill="#8a8a8a"/></svg><svg class="ic" style="left:113px;top:535.98px" width="13" height="15" viewBox="0 0 13 15"><path fill="#828282" d="M0.6 1h7.3v1.2H1.8v9.6H0.6z"/><path fill="#828282" d="M2.7 3.6h5.6l3.6 3.6v6.6H2.7z"/><path fill="#f6f6f6" d="M7.6 4.5v2.9h2.9z"/></svg><svg class="ic" style="left:138px;top:538.58px" width="11" height="11" viewBox="0 0 11 11"><rect x="0.4" y="0.2" width="10" height="10" rx="0.8" fill="#828282"/><path fill="#f2f2f2" d="M2.6 5.2L5.4 2.6 8.2 5.2 5.4 7.8z"/></svg><div class="t" style="left:169px;top:539.00px;font-size:9.5px;line-height:9.5px;color:#363636;font-weight:normal;letter-spacing:0px;transform:scaleX(0.961);transform-origin:0 0;">CA Mobile popunder Casino</div><div class="t" style="left:346.4px;top:539.00px;font-size:9.5px;line-height:9.5px;color:#363636;font-weight:normal;letter-spacing:0px;">Casino</div><div class="t" style="left:456.4px;top:539.00px;font-size:9.5px;line-height:9.5px;color:#cf444c;font-weight:normal;letter-spacing:0px;transform:scaleX(0.98);transform-origin:0 0;">No Funds</div><div class="t" style="left:536.6px;top:539.00px;font-size:9.5px;line-height:9.5px;color:#363636;font-weight:normal;letter-spacing:0px;transform:scaleX(0.985);transform-origin:0 0;">5035344</div><div class="t" style="left:591.6px;top:539.00px;font-size:9.5px;line-height:9.5px;color:#363636;font-weight:normal;letter-spacing:0px;transform:scaleX(0.965);transform-origin:0 0;">Popunders</div><div class="t" style="left:731.2px;top:539.00px;font-size:9.5px;line-height:9.5px;color:#363636;font-weight:normal;letter-spacing:0px;">0</div><div class="t" style="left:807.4px;top:539.00px;font-size:9.5px;line-height:9.5px;color:#363636;font-weight:normal;letter-spacing:0px;">0</div><div class="t" style="left:862.3px;top:539.00px;font-size:9.5px;line-height:9.5px;color:#363636;font-weight:normal;letter-spacing:0px;transform:scaleX(0.98);transform-origin:0 0;">&euro;0.000</div><div class="t" style="left:913.2px;top:539.00px;font-size:9.5px;line-height:9.5px;color:#363636;font-weight:normal;letter-spacing:0px;transform:scaleX(0.96);transform-origin:0 0;">&euro;0.00</div><div class="t" style="left:977.6px;top:539.00px;font-size:9.5px;line-height:9.5px;color:#363636;font-weight:normal;letter-spacing:0px;">0</div><div style="position:absolute;left:0;top:554.56px;width:1000px;height:21.18px;background:#efefef"></div><div class="cb" style="left:10.2px;top:557.86px"></div><svg class="ic" style="left:42px;top:558.76px" width="12" height="12" viewBox="0 0 12 12"><path d="M1.9 10.4L8.0 4.3" stroke="#828282" stroke-width="2.5" stroke-linecap="butt"/><path d="M1.3 11.1L2.9 10.9 1.5 9.5z" fill="#828282"/><path d="M8.7 3.6L10.1 2.2" stroke="#828282" stroke-width="2.5"/></svg><svg class="ic" style="left:66px;top:558.76px" width="12" height="12" viewBox="0 0 12 12"><rect x="1.5" y="5.0" width="2.1" height="5" fill="#828282"/><rect x="5.2" y="1.0" width="2.1" height="9" fill="#828282"/><rect x="8.9" y="3.5" width="2.1" height="6.5" fill="#828282"/></svg><svg class="ic" style="left:89px;top:559.16px" width="13" height="13" viewBox="0 0 13 13"><circle cx="6.9" cy="6.3" r="5.0" fill="none" stroke="#8a8a8a" stroke-width="1.25"/><rect x="5.3" y="4.6" width="1.0" height="3.4" fill="#8a8a8a"/><rect x="7.5" y="4.6" width="1.0" height="3.4" fill="#8a8a8a"/></svg><svg class="ic" style="left:113px;top:557.16px" width="13" height="15" viewBox="0 0 13 15"><path fill="#828282" d="M0.6 1h7.3v1.2H1.8v9.6H0.6z"/><path fill="#828282" d="M2.7 3.6h5.6l3.6 3.6v6.6H2.7z"/><path fill="#f6f6f6" d="M7.6 4.5v2.9h2.9z"/></svg><svg class="ic" style="left:138px;top:559.76px" width="11" height="11" viewBox="0 0 11 11"><rect x="0.4" y="0.2" width="10" height="10" rx="0.8" fill="#828282"/><path fill="#f2f2f2" d="M2.6 5.2L5.4 2.6 8.2 5.2 5.4 7.8z"/></svg><div class="t" style="left:169px;top:560.00px;font-size:9.5px;line-height:9.5px;color:#363636;font-weight:normal;letter-spacing:0px;transform:scaleX(0.961);transform-origin:0 0;">CA Desktop popunder Casino</div><div class="t" style="left:346.4px;top:560.00px;font-size:9.5px;line-height:9.5px;color:#363636;font-weight:normal;letter-spacing:0px;">Casino</div><div class="t" style="left:456.4px;top:560.00px;font-size:9.5px;line-height:9.5px;color:#cf444c;font-weight:normal;letter-spacing:0px;transform:scaleX(0.98);transform-origin:0 0;">No Funds</div><div class="t" style="left:536.6px;top:560.00px;font-size:9.5px;line-height:9.5px;color:#363636;font-weight:normal;letter-spacing:0px;transform:scaleX(0.985);transform-origin:0 0;">5035342</div><div class="t" style="left:591.6px;top:560.00px;font-size:9.5px;line-height:9.5px;color:#363636;font-weight:normal;letter-spacing:0px;transform:scaleX(0.965);transform-origin:0 0;">Popunders</div><div class="t" style="left:731.2px;top:560.00px;font-size:9.5px;line-height:9.5px;color:#363636;font-weight:normal;letter-spacing:0px;">0</div><div class="t" style="left:807.4px;top:560.00px;font-size:9.5px;line-height:9.5px;color:#363636;font-weight:normal;letter-spacing:0px;">0</div><div class="t" style="left:862.3px;top:560.00px;font-size:9.5px;line-height:9.5px;color:#363636;font-weight:normal;letter-spacing:0px;transform:scaleX(0.98);transform-origin:0 0;">&euro;0.000</div><div class="t" style="left:913.2px;top:560.00px;font-size:9.5px;line-height:9.5px;color:#363636;font-weight:normal;letter-spacing:0px;transform:scaleX(0.96);transform-origin:0 0;">&euro;0.00</div><div class="t" style="left:977.6px;top:560.00px;font-size:9.5px;line-height:9.5px;color:#363636;font-weight:normal;letter-spacing:0px;">0</div><div style="position:absolute;left:163px;top:152px;width:1px;height:421px;background:#e4e4e4"></div><div style="position:absolute;left:972px;top:152px;width:1px;height:421px;background:#e4e4e4"></div>
</body></html>
